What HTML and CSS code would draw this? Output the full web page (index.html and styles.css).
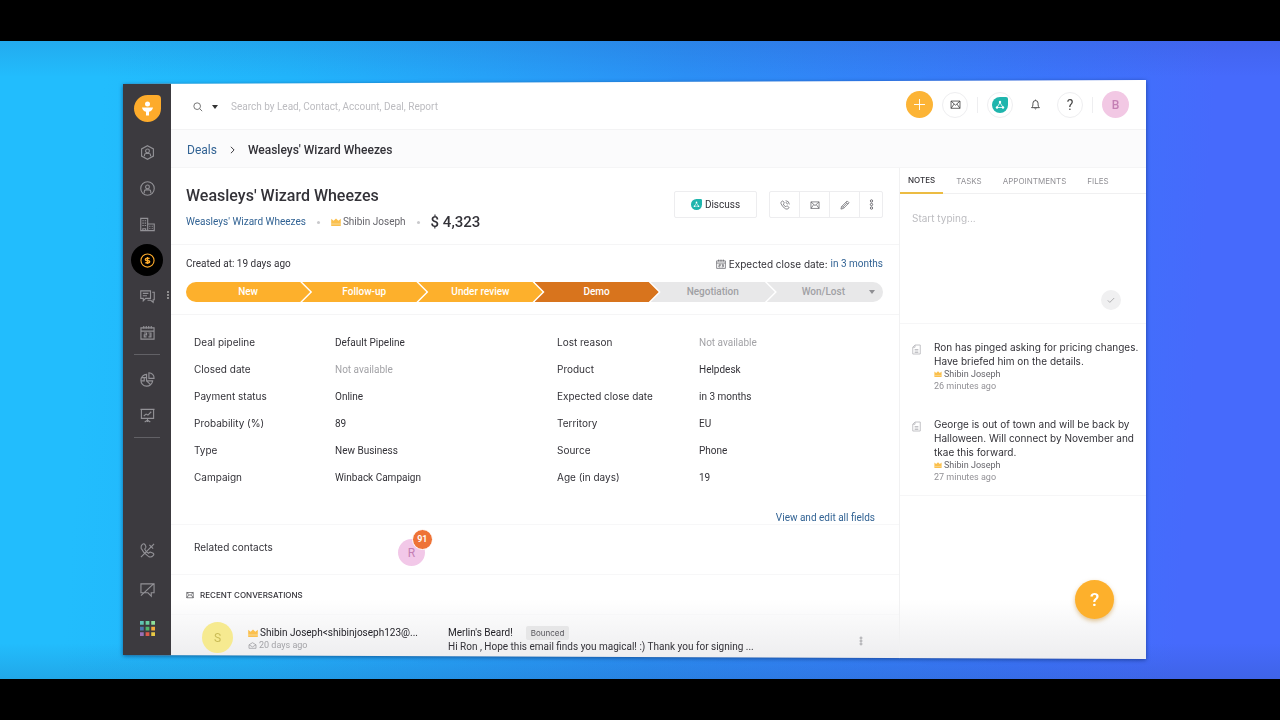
FILE: index.html
```html
<!DOCTYPE html>
<html lang="en">
<head>
<meta charset="utf-8">
<title>Weasleys' Wizard Wheezes - Deals</title>
<link rel="stylesheet" href="styles.css">
</head>
<body>
<svg class="defs" aria-hidden="true">
  <symbol id="mail" viewBox="0 0 16 16"><path d="M1.5 3h13v10.500h-13zM1.500 3 8 9l6.500-6M1.500 13.500 6 7.300M14.500 13.500 10 7.300"/></symbol>
  <symbol id="crown" viewBox="0 0 12 10"><path fill="#fbc04d" stroke="none" d="M0 1l3 2.500L6 .5l3 3L12 1v9H0z"/><path stroke="#f8dfa8" stroke-width="1" d="M0 7.500h12"/></symbol>
  <symbol id="fresh" viewBox="0 0 16 16"><path fill="#1fb5ad" stroke="none" d="M8 0h6a2 2 0 0 1 2 2v6a8 8 0 1 1-8-8z"/><path stroke="#fff" stroke-width=".8" d="M8 5.500 5 10.500h6z"/><g fill="#fff" stroke="none"><circle cx="8" cy="5" r="1.200"/><circle cx="5" cy="10.500" r="1.200"/><circle cx="11" cy="10.500" r="1.200"/></g></symbol>
  <symbol id="dots" viewBox="0 0 6 14"><circle cx="3" cy="2.500" r="1.500"/><circle cx="3" cy="7" r="1.500"/><circle cx="3" cy="11.500" r="1.500"/></symbol>
  <symbol id="calendar" viewBox="0 0 16 16"><path d="M1 3h14v12H1zM1 6.500h14M4 1v3M6.700 1v3M9.300 1v3M12 1v3"/><path d="M4.300 8.500h2.700v2H4.500v2.200H7M9 8.500h2.700v4.200H9M9.500 10.600h2"/></symbol>
  <symbol id="note" viewBox="0 0 12 14"><path d="M4 1h7v12H1V4zM4 1v3H1M3.500 7h5M3.500 9h5M3.500 11h5"/></symbol>
</svg>
<main class="stage">
 <div class="shadow">
 <div class="window">
  <nav class="sidebar" aria-label="Main">
    <a class="logo" href="#" aria-label="Home"><svg viewBox="0 0 27 27"><path fill="#fdab2b" stroke="none" d="M13.500 0H23a4 4 0 0 1 4 4v9.500A13.500 13.500 0 1 1 13.500 0z"/><g fill="#fff" stroke="none"><circle cx="13.500" cy="9" r="2.500"/><path d="M8 12.500h11q-.6 3.500-4 4.200v3.800h-3v-3.800q-3.400-.7-4-4.200z"/></g></svg></a>
    <a href="#" aria-label="Leads"><svg viewBox="0 0 16 16"><path d="M8 .8 14.300 4.200v7.600L8 15.200 1.700 11.800V4.200z"/><circle cx="8" cy="6.300" r="2"/><path d="M4.700 12V11q0-2 2-2h2.600q2 0 2 2v1"/></svg></a>
    <a href="#" aria-label="Contacts"><svg viewBox="0 0 16 16"><circle cx="8" cy="8" r="7.200"/><circle cx="8" cy="6.300" r="2"/><path d="M4.500 13v-1.500q0-2 2-2h3q2 0 2 2V13"/></svg></a>
    <a href="#" aria-label="Accounts"><svg viewBox="0 0 16 16"><path d="M.8 1.500h7.400v13H.8zM8.200 7.500h7v7h-7M3 14.500v-2h3v2M2.500 4h1.500M5 4h1.500M2.500 6.500h1.500M5 6.500h1.500M2.500 9h1.500M5 9h1.500M10 10h1M12.500 10h1M10 12.200h1M12.500 12.200h1"/></svg></a>
    <a class="current" href="#" aria-label="Deals" aria-current="page"><svg viewBox="0 0 16 16"><circle cx="8" cy="8" r="7"/><path stroke-width="1.500" d="M10.300 5.700H7q-1.300 0-1.300 1.200T7 8.100h2q1.300 0 1.300 1.100T9 10.400H5.700M8 4.200v7.600"/></svg></a>
    <a href="#" aria-label="Conversations"><svg viewBox="0 0 16 16"><path d="M.8 2h10.400v8H6l-2.500 2.700V10H.8zM3 4.700h6M3 7.200h4.500M13 3.500h2.200v8H14v2.700L11.500 12H8"/></svg></a>
    <a href="#" aria-label="Appointments"><svg><use href="#calendar"/></svg></a>
    <span class="rule"></span>
    <a href="#" aria-label="Reports"><svg viewBox="0 0 16 16"><path d="M7 2.500A6.300 6.300 0 1 0 13.500 9.500H7zM9.500.8v6H15A5.700 5.700 0 0 0 9.500.8zM7 9.500l4.500 4.300M7 6H2M4.500 6v3.500H.8"/></svg></a>
    <a href="#" aria-label="Dashboards"><svg viewBox="0 0 16 16"><path d="M.5 1.500h15M1.500 1.500v9.500h13V1.500M8 11v4M5 15l3-2 3 2M4 8.500l2.500-2 2 1L12 4"/></svg></a>
    <span class="rule"></span>
    <a class="push" href="#" aria-label="Phone off"><svg viewBox="0 0 16 16"><path d="M1 15 15 1M2.500 1.500q2-1.500 3 .5l.8 2q.3 1-1.300 2.500 1 2.500 4 4.500 1.500-1.500 2.500-1.200l2.500 1.200q1.500 1.200 0 2.500-2 2.300-5 .8Q3.500 10.500 1.200 5.500.8 3 2.500 1.500zM10 2l4 4M10.500 5.500 14 2.200"/></svg></a>
    <a href="#" aria-label="Chat off"><svg viewBox="0 0 16 16"><path d="M1 2h14v9.500h-3V15l-3.500-3.500H1zM1 14.500 15 1.500"/></svg></a>
    <a href="#" aria-label="Apps"><svg viewBox="0 0 16 16" class="apps"><g fill="#5fc3b5"><path d="M0 0h4v4H0z"/><path fill="#68cfa0" d="M6 0h4v4H6z"/><path fill="#8ddf9a" d="M12 0h4v4h-4z"/><path fill="#4d79ae" d="M0 6h4v4H0z"/><path fill="#52b66b" d="M6 6h4v4H6z"/><path fill="#f2a93c" d="M12 6h4v4h-4z"/><path fill="#9a70b5" d="M0 12h4v4H0z"/><path fill="#de5a4a" d="M6 12h4v4H6z"/><path fill="#e8c944" d="M12 12h4v4h-4z"/></g></svg></a>
    <svg class="grip"><use href="#dots"/></svg>
  </nav>
  <div class="app">
   <header class="topbar">
    <button class="scope" aria-label="Search scope"><svg viewBox="0 0 12 12"><circle cx="5" cy="5" r="4"/><path d="M8 8l3 3"/></svg><span class="caret"></span></button>
    <input class="search" type="search" aria-label="Search" placeholder="Search by Lead, Contact, Account, Deal, Report">
    <div class="tools">
     <button class="round add" aria-label="Add"><svg viewBox="0 0 14 14"><path d="M7 0v14M0 7h14"/></svg></button>
     <button class="round" aria-label="Mail"><svg><use href="#mail"/></svg></button>
     <span class="sep"></span>
     <button class="round brand" aria-label="Freshworks"><svg><use href="#fresh"/></svg></button>
     <button class="round plain" aria-label="Notifications"><svg viewBox="0 0 14 14"><path d="M2 11q1.700-1.200 1.700-3.500V5.500Q3.700 2 7 2t3.300 3.500v2Q10.300 9.800 12 11zM7 .8V2M5.700 11.500q1.300 2.200 2.600 0"/></svg></button>
     <button class="round ask" aria-label="Help">?</button>
     <span class="sep"></span>
     <button class="round avatar">B</button>
    </div>
   </header>
   <nav class="crumbs" aria-label="Breadcrumb"><a href="#">Deals</a><svg viewBox="0 0 6 10"><path d="M1 1l4 4-4 4"/></svg><span>Weasleys' Wizard Wheezes</span></nav>
   <div class="columns">
    <div class="deal">
     <section class="summary">
      <div class="names">
       <h1>Weasleys' Wizard Wheezes</h1>
       <div class="meta"><a href="#">Weasleys' Wizard Wheezes</a><i></i><span class="owner"><svg class="crown"><use href="#crown"/></svg>Shibin Joseph</span><i></i><strong>$ 4,323</strong></div>
      </div>
      <button class="discuss"><svg><use href="#fresh"/></svg>Discuss</button>
      <div class="actions">
       <button aria-label="Call"><svg viewBox="0 0 16 16"><path d="M2.500 2.500q2-2 3.200 0l1 2q.3 1.200-1.400 2 .7 2.500 4 4.300 1-1.700 2.200-1.300l2 1.300q1.500 1 0 2.700-2 2-4.800.5Q3.500 11 1.500 5.500q-.2-1.800 1-3zM9 1q5.500.5 6 6M9 4q2.700.3 3 3"/></svg></button>
       <button aria-label="Email"><svg><use href="#mail"/></svg></button>
       <button aria-label="Edit"><svg viewBox="0 0 16 16"><path d="M1.500 14.500l1-4 9-9 3 3-9 9zM9.500 3.500l3 3M3 10l3 3M10.800 5l-6.500 6.500"/></svg></button>
       <button aria-label="More"><svg class="more"><use href="#dots"/></svg></button>
      </div>
     </section>
     <section class="progress">
      <div class="dates"><span>Created at: 19 days ago</span><span class="expected"><svg><use href="#calendar"/></svg><span class="label">Expected close date:</span><a href="#">in 3 months</a></span></div>
      <div class="stages">
       <button>New</button><button>Follow-up</button><button>Under review</button><button class="active">Demo</button><button class="todo">Negotiation</button><button class="todo">Won/Lost<span class="caret"></span></button>
      </div>
     </section>
     <section class="fields">
      <dl>
       <dt>Deal pipeline</dt><dd>Default Pipeline</dd><dt>Lost reason</dt><dd class="none">Not available</dd>
       <dt>Closed date</dt><dd class="none">Not available</dd><dt>Product</dt><dd>Helpdesk</dd>
       <dt>Payment status</dt><dd>Online</dd><dt>Expected close date</dt><dd>in 3 months</dd>
       <dt>Probability (%)</dt><dd>89</dd><dt>Territory</dt><dd>EU</dd>
       <dt>Type</dt><dd>New Business</dd><dt>Source</dt><dd>Phone</dd>
       <dt>Campaign</dt><dd>Winback Campaign</dd><dt>Age (in days)</dt><dd>19</dd>
      </dl>
      <a class="all" href="#">View and edit all fields</a>
     </section>
     <section class="related"><span class="label">Related contacts</span><button class="contact">R<span class="badge">91</span></button></section>
     <h2><svg><use href="#mail"/></svg>RECENT CONVERSATIONS</h2>
     <article class="mailrow">
      <span class="face">S</span>
      <div class="from"><div class="sender"><svg class="crown"><use href="#crown"/></svg>Shibin Joseph&lt;shibinjoseph123@...</div><div class="when"><svg viewBox="0 0 12 10"><path d="M1 4l5-3 5 3v5H1zM1 4l5 3 5-3"/></svg>20 days ago</div></div>
      <div class="body"><div class="subject">Merlin's Beard!<span class="tag">Bounced</span></div><div>Hi Ron , Hope this email finds you magical! :) Thank you for signing ...</div></div>
      <button class="rowmore" aria-label="More"><svg><use href="#dots"/></svg></button>
     </article>
    </div>
    <aside class="panel">
     <div class="tabs" role="tablist"><button class="on" role="tab" aria-selected="true">NOTES</button><button role="tab">TASKS</button><button role="tab">APPOINTMENTS</button><button role="tab">FILES</button></div>
     <div class="compose"><textarea aria-label="Note" placeholder="Start typing..."></textarea><button class="save" aria-label="Save note"><svg viewBox="0 0 10 10"><path d="M1 5.500l2.500 2.500L9 2.500"/></svg></button></div>
     <div class="notes">
      <article><svg class="noteicon"><use href="#note"/></svg><div><p>Ron has pinged asking for pricing changes. Have briefed him on the details.</p><div class="by"><svg class="crown"><use href="#crown"/></svg>Shibin Joseph</div><time>26 minutes ago</time></div></article>
      <article><svg class="noteicon"><use href="#note"/></svg><div><p>George is out of town and will be back by Halloween. Will connect by November and tkae this forward.</p><div class="by"><svg class="crown"><use href="#crown"/></svg>Shibin Joseph</div><time>27 minutes ago</time></div></article>
     </div>
    </aside>
   </div>
  </div>
  <button class="help" aria-label="Get help">?</button>
 </div>
 </div>
</main>
</body>
</html>
```
FILE: styles.css
```css
* { box-sizing: border-box; }
body { margin: 0; min-height: 100vh; display: flex; flex-direction: column; padding: 41px 0; background: #000; font-family: Roboto, Inter, sans-serif; font-size: 10px; line-height: 14px; color: #333238; }
button, input, textarea { font: inherit; color: inherit; border: 0; background: none; padding: 0; margin: 0; }
button { cursor: pointer; }
a { color: #326394; text-decoration: none; }
svg { display: block; flex: none; width: 10px; height: 10px; fill: none; stroke: currentColor; stroke-width: 1.2; overflow: visible; }
.defs { position: absolute; width: 0; height: 0; }
.stage { flex: 1; display: flex; padding: 39px 134px 20px 123px; background: linear-gradient(rgba(40,60,150,.14), transparent 36px, transparent calc(100% - 36px), rgba(30,70,140,.18)), linear-gradient(94deg, #22bdfd 8%, #21b4fb 22%, #2b8ff5 52%, #3c74fb 80%, #466afc 92%); }
.shadow { flex: 1; display: flex; filter: drop-shadow(0 1px 2px rgba(0,30,80,.55)); }
.window { position: relative; flex: 1; display: flex; min-width: 0; background: linear-gradient(#fff calc(100% - 60px), #ededef); clip-path: polygon(0 4px, 100% 0, 100% 100%, 0 calc(100% - 4px)); }
.sidebar { position: relative; flex: 0 0 48px; display: flex; flex-direction: column; align-items: center; padding: 14px 0 11px; background: #3c3a3f; color: #929196; }
.sidebar a { color: inherit; width: 32px; height: 32px; margin-bottom: 4px; display: grid; place-items: center; border-radius: 50%; }
.sidebar svg { width: 15px; height: 15px; }
.sidebar .logo { height: 28px; margin-bottom: 14px; }
.sidebar .logo svg { width: 27px; height: 27px; }
.sidebar .current { background: #000; color: #fdab2b; }
.sidebar .rule { width: 26px; height: 1px; margin: 2px 0 8px; background: #626166; }
.sidebar .push { margin-top: auto; }
.sidebar a:nth-last-of-type(-n+2) { margin-top: 3px; }
.sidebar .apps { stroke: none; }
.sidebar .grip { position: absolute; right: 1px; top: 209px; width: 4px; height: 12px; fill: #aaa; stroke: none; }
.app { flex: 1; min-width: 0; display: flex; flex-direction: column; }
.topbar { height: 50px; display: flex; align-items: center; padding: 0 17px 0 22px; border-bottom: 1px solid #f3f3f4; }
.scope { display: flex; align-items: center; gap: 9px; padding-top: 4px; color: #777; }
.caret { border: 3px solid transparent; border-top: 4px solid #333; border-bottom: 0; }
.search { flex: 1; min-width: 0; margin-left: 13px; padding-top: 4px; outline: 0; }
.search::placeholder, textarea::placeholder { color: #bcbcc0; opacity: 1; }
.tools { display: flex; align-items: center; gap: 9px; }
.round { width: 26px; height: 26px; flex: none; display: grid; place-items: center; border: 1px solid #eeeef0; border-radius: 50%; color: #444; }
.round svg { width: 11px; height: 11px; }
.add { border: 0; width: 27px; height: 27px; background: #fcb436; color: #fff; }
.brand svg { width: 16px; height: 16px; }
.plain { border-color: transparent; }
.ask { font-size: 14px; }
.sep { width: 1px; height: 16px; background: #eeeef0; }
.avatar { border: 0; width: 27px; height: 27px; background: #f2c8e4; color: #c47fb4; font-size: 12px; font-weight: 500; }
.crumbs { height: 38px; display: flex; align-items: center; gap: 13px; padding: 2px 16px 0; background: #fbfbfc; border-bottom: 1px solid #f5f5f6; font-size: 12px; font-weight: 500; }
.crumbs a { font-weight: 400; }
.crumbs svg { width: 5px; height: 8px; }
.columns { flex: 1; display: flex; }
.deal { flex: 1; min-width: 0; }
.summary { height: 77px; display: flex; align-items: flex-start; padding: 18px 16px 0 15px; border-bottom: 1px solid #f5f5f6; }
.names { flex: 1; }
h1 { margin: 0; font-size: 16px; line-height: 20px; font-weight: 500; }
.meta { display: flex; align-items: center; margin-top: 8px; line-height: 16px; color: #66656b; }
.meta i { width: 3px; height: 3px; margin: 0 11px; border-radius: 50%; background: #c9c9cc; }
.meta strong { color: #333238; font-size: 15px; font-weight: 500; }
.owner, .by, .sender, .when { display: flex; align-items: center; gap: 2px; }
.label, dt { font-family: Inter, sans-serif; }
.crown { width: 10px; height: 8px; }
.discuss { width: 83px; height: 27px; margin: 5px 12px 0 0; display: flex; align-items: center; justify-content: center; gap: 3px; border: 1px solid #ededef; border-radius: 2px; }
.discuss svg { width: 11px; height: 11px; }
.actions { display: flex; margin-top: 5px; border: 1px solid #ededef; border-radius: 2px; color: #66656b; }
.actions button { width: 30px; height: 25px; display: grid; place-items: center; }
.actions button:first-child { width: 29px; }
.actions button + button { border-left: 1px solid #ededef; }
.actions button:last-child { width: 23px; }
.actions .more { width: 5px; height: 11px; }
.progress { height: 70px; padding: 12px 16px 0 15px; border-bottom: 1px solid #f5f5f6; }
.dates { display: flex; justify-content: space-between; }
.expected { display: flex; align-items: center; gap: 3px; }
.expected svg { color: #66656b; }
.stages { display: flex; margin-top: 11px; border-radius: 10px; overflow: hidden; }
.stages button { flex: 1 1 0; min-width: 0; height: 20px; margin-right: -8px; background: #fdb02c; color: #fff; font-weight: 500; clip-path: polygon(0 0, calc(100% - 10px) 0, 100% 50%, calc(100% - 10px) 100%, 0 100%, 10px 50%); }
.stages button:first-child { clip-path: polygon(0 0, calc(100% - 10px) 0, 100% 50%, calc(100% - 10px) 100%, 0 100%); }
.stages button.active { background: #d8741d; }
.stages button.todo { background: #e8e8e9; color: #a0a0a4; }
.stages button:last-child { display: flex; align-items: center; justify-content: flex-end; gap: 24px; clip-path: polygon(0 0, 100% 0, 100% 100%, 0 100%, 10px 50%); }
.stages .caret { margin-right: 16px; border-top-color: #8f8f93; }
.fields { height: 210px; padding: 20px 24px 0 23px; border-bottom: 1px solid #f7f7f8; }
dl { margin: 0; display: grid; grid-template-columns: 141fr 222fr 142fr 176fr; grid-auto-rows: 14px; row-gap: 13px; }
dd { margin: 0; padding-top: 1px; }
.none { color: #a3a3a7; }
.all { display: block; margin-top: 27px; text-align: right; }
.related { height: 50px; display: flex; align-items: flex-start; gap: 125px; padding: 15px 23px 0; border-bottom: 1px solid #f7f7f8; }
.contact { position: relative; width: 27px; height: 27px; margin-top: -1px; border-radius: 50%; background: #f2c8e8; color: #c47fb4; font-size: 12px; }
.badge { position: absolute; right: -8px; top: -10px; width: 21px; height: 21px; border: 1px solid #fff; border-radius: 50%; background: #ee7336; color: #fff; font-size: 9px; line-height: 19px; font-weight: 600; }
h2 { height: 40px; margin: 0; padding: 0 15px; display: flex; align-items: center; gap: 6px; border-bottom: 1px solid #f7f7f8; font-family: Inter, sans-serif; font-size: 8px; font-weight: 500; }
h2 svg { width: 8px; height: 8px; }
.mailrow { display: flex; align-items: flex-start; padding: 7px 36px 0 31px; }
.face { width: 31px; height: 31px; border-radius: 50%; display: grid; place-items: center; background: #f6ea90; color: #cabc56; font-size: 12px; }
.from { flex: 0 0 200px; margin: 4px 0 0 15px; line-height: 13px; }
.when { font-size: 9px; line-height: 12px; color: #a3a3a7; }
.when svg { width: 9px; height: 7px; }
.sender, .subject { color: #1f1e24; }
.body { flex: 1; margin-top: 4px; white-space: nowrap; }
.subject { display: flex; align-items: center; gap: 13px; height: 14px; }
.tag { padding: 0 5px; border-radius: 2px; background: #e6e6e7; color: #55545a; font-family: Inter, sans-serif; font-size: 8px; line-height: 14px; }
.rowmore { margin-top: 14px; }
.rowmore svg { width: 4px; height: 10px; color: #99999d; }
.panel { flex: 0 0 247px; border-left: 1px solid #f1f1f2; }
.tabs { height: 26px; display: flex; gap: 5px; border-bottom: 1px solid #f0f0f1; font-family: Inter, sans-serif; font-size: 8px; color: #929196; }
.tabs button { padding: 0 8px; height: 26px; }
.tabs .on { color: #333238; font-weight: 500; border-bottom: 2px solid #ecbc43; }
.compose { position: relative; height: 130px; border-bottom: 1px solid #f6f6f7; }
textarea { display: block; width: 100%; height: 100%; padding: 17px 12px; resize: none; outline: 0; font-family: Inter, sans-serif; }
.save { position: absolute; right: 25px; bottom: 13px; width: 20px; height: 20px; border-radius: 50%; display: grid; place-items: center; background: #f0f0f1; color: #aaaaae; }
.save svg { width: 8px; height: 8px; }
.notes article { display: flex; gap: 13px; padding: 16px 4px 12px 12px; }
.notes article + article { padding-top: 13px; border-bottom: 1px solid #f6f6f7; }
.noteicon { width: 9px; height: 11px; margin-top: 4px; color: #bbbbbf; }
.notes p { margin: 0; font-family: Inter, sans-serif; }
.by, time { font-size: 9px; line-height: 12px; color: #66656b; }
.by .crown { width: 8px; height: 6px; }
time { display: block; color: #929196; }
.help { position: absolute; right: 32px; bottom: 40px; width: 39px; height: 39px; border-radius: 50%; background: #fdb02c; color: #fff; font-size: 19px; font-weight: 500; box-shadow: 0 2px 4px rgba(200,140,40,.5); }
```
